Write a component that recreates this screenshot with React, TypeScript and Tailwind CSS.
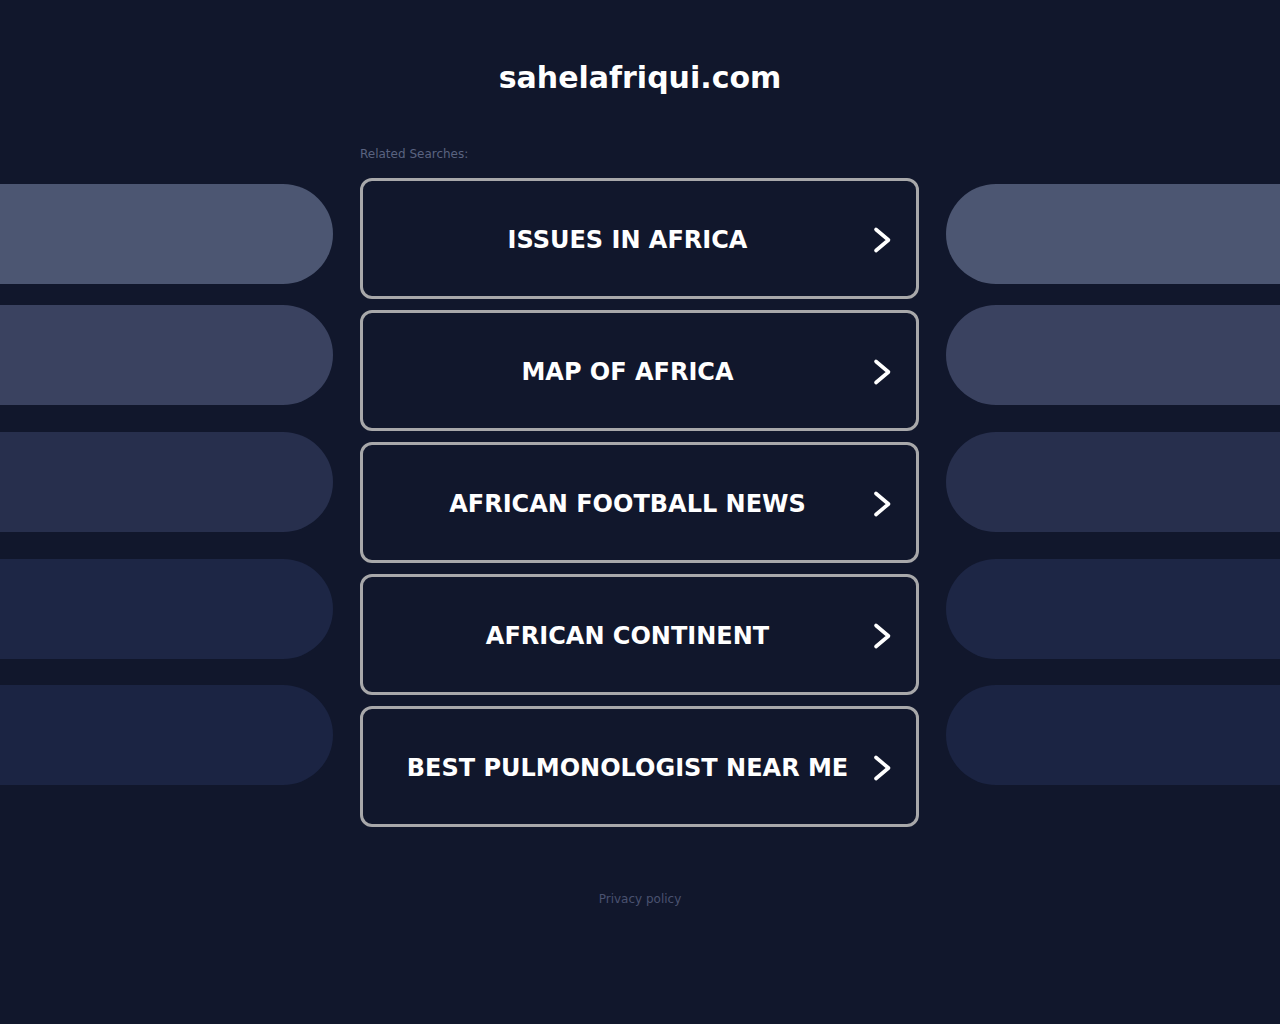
import React from "react";

const items = [
  "ISSUES IN AFRICA",
  "MAP OF AFRICA",
  "AFRICAN FOOTBALL NEWS",
  "AFRICAN CONTINENT",
  "BEST PULMONOLOGIST NEAR ME",
];

function Chevron() {
  return (
    <svg width="24" height="28" viewBox="0 0 24 28" className="shrink-0">
      <path
        d="M6 3.5 L18.5 14 L6 24.5"
        fill="none"
        stroke="#ffffff"
        strokeWidth="3.6"
        strokeLinecap="round"
        strokeLinejoin="round"
      />
    </svg>
  );
}

function LeftPills() {
  return (
    <div className="w-[333px] shrink-0 pt-[38px] flex flex-col">
      <div className="h-[100px] rounded-r-[50px] bg-[#4c5672]" />
      <div className="h-[100px] mt-[21px] rounded-r-[50px] bg-[#3a4260]" />
      <div className="h-[100px] mt-[27px] rounded-r-[50px] bg-[#272f4d]" />
      <div className="h-[100px] mt-[27px] rounded-r-[50px] bg-[#1d2645]" />
      <div className="h-[100px] mt-[26px] rounded-r-[50px] bg-[#1b2443]" />
    </div>
  );
}

function RightPills() {
  return (
    <div className="flex-1 pt-[38px] flex flex-col">
      <div className="h-[100px] rounded-l-[50px] bg-[#4c5672]" />
      <div className="h-[100px] mt-[21px] rounded-l-[50px] bg-[#3a4260]" />
      <div className="h-[100px] mt-[27px] rounded-l-[50px] bg-[#272f4d]" />
      <div className="h-[100px] mt-[27px] rounded-l-[50px] bg-[#1d2645]" />
      <div className="h-[100px] mt-[26px] rounded-l-[50px] bg-[#1b2443]" />
    </div>
  );
}

export default function App() {
  return (
    <div
      className="min-h-screen bg-[#11172c] text-white"
      style={{ fontFamily: '"DejaVu Sans", Verdana, sans-serif' }}
    >
      <h1 className="pt-[60px] text-center text-[30px] leading-[36px] font-bold text-white">
        sahelafriqui.com
      </h1>
      <div className="mt-[50px] flex">
        <LeftPills />
        <div className="w-[559px] shrink-0 mx-[27px] flex flex-col">
          <div className="text-[12px] leading-[16px] text-[#5a6380] mb-[16px]">
            Related Searches:
          </div>
          <div className="flex flex-col gap-[11px]">
            {items.map((t) => (
              <a
                key={t}
                href="#"
                className="h-[121px] rounded-[12px] border-[3px] border-[#a8a8aa] flex items-center pt-[3px] pl-[25px] pr-[22px] gap-[3px]"
              >
                <span className="flex-1 text-center text-[24px] leading-[30px] font-bold text-white">
                  {t}
                </span>
                <Chevron />
              </a>
            ))}
          </div>
        </div>
        <RightPills />
      </div>
      <div className="mt-[64px] text-center text-[12px] leading-[16px] text-[#4a5270] pb-[100px]">
        Privacy policy
      </div>
    </div>
  );
}
